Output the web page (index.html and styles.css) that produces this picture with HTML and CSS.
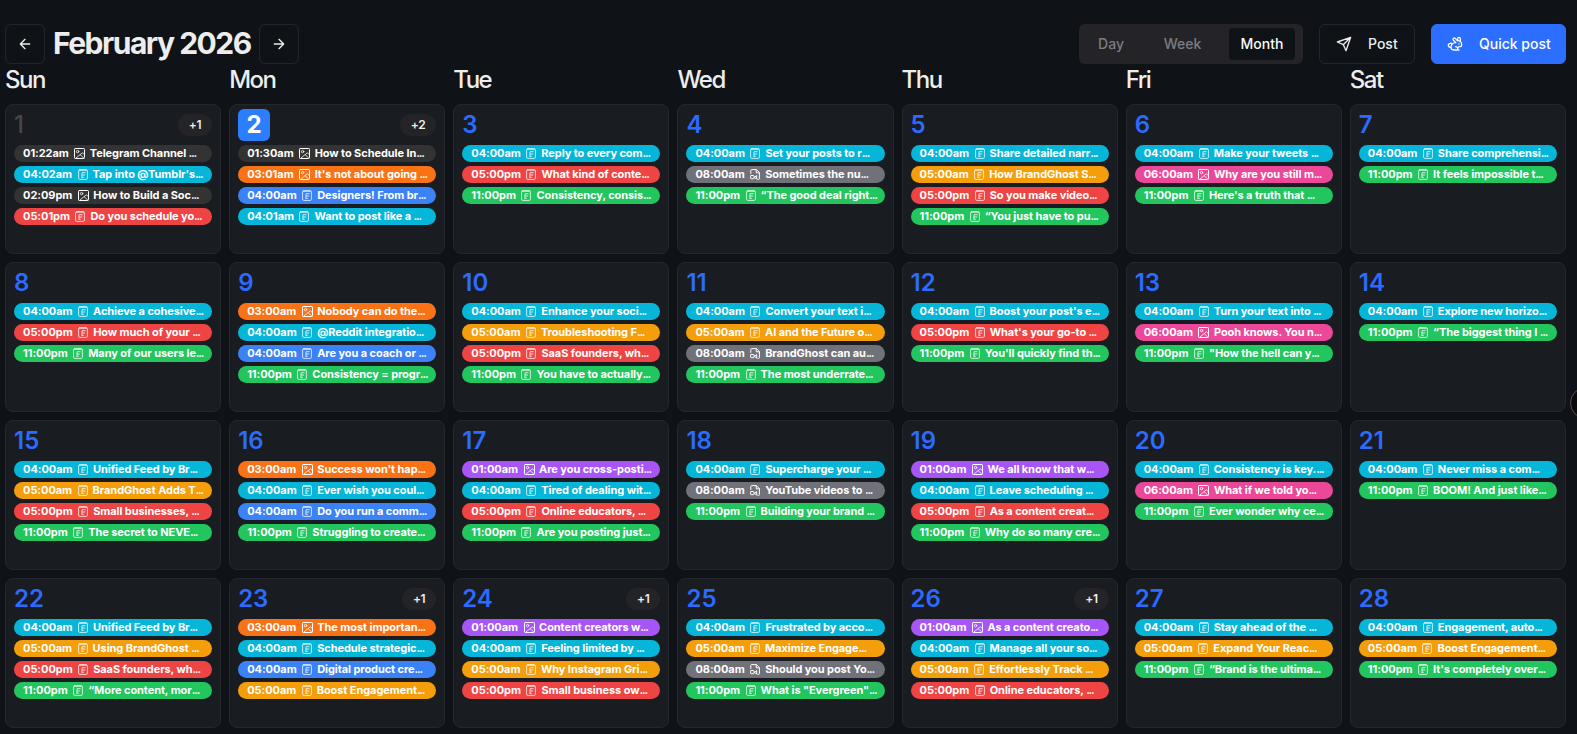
FILE: index.html
```html
<!DOCTYPE html>
<html lang="en">
<head>
<meta charset="utf-8">
<title>Calendar</title>
<link rel="stylesheet" href="styles.css">
</head>
<body>
<svg class="sprite" aria-hidden="true">
  <symbol id="i-image" viewBox="0 0 11 11"><rect x=".5" y=".5" width="10" height="10" rx=".8"/><g stroke-width=".8"><circle cx="3.600" cy="3.600" r="1.200"/><path d="M2 10 8.300 4.800l2 1.700M6.300 6.800l3.400 3.200"/></g></symbol>
  <symbol id="i-text" viewBox="0 0 10 11"><rect x=".6" y=".6" width="8.800" height="9.800" rx="1.200"/><path d="M1.500 1.300h7"/><path d="M4 8.500V3.700h3.200M4 6h2.800M4 8.300h1.400"/></symbol>
  <symbol id="i-video" viewBox="0 0 10 11"><path d="M.8 4.500V1.400a.8.8 0 0 1 .8-.8h4.800l3 3v6a.8.8 0 0 1-.8.8h-.8M6.200.8v3h3"/><rect x=".6" y="6.500" width="3.400" height="3.200" rx=".6"/><path d="m4.500 8.100 2.200-1.500v3z"/></symbol>
</svg>
<main class="page">
  <header class="toolbar">
    <div class="nav">
      <button class="btn square"><svg class="ico16" viewBox="0 0 24 24"><path d="m12 19-7-7 7-7M19 12H5"/></svg></button>
      <h1 class="title">February 2026</h1>
      <button class="btn square"><svg class="ico16" viewBox="0 0 24 24"><path d="M5 12h14M12 5l7 7-7 7"/></svg></button>
    </div>
    <div class="actions">
      <div class="segments"><span class="seg day-seg">Day</span><span class="seg week-seg">Week</span><span class="seg active">Month</span></div>
      <button class="btn post"><svg class="ico16" viewBox="0 0 24 24"><path d="M22 2 15 22l-4-9-9-4zM22 2 11 13"/></svg><span>Post</span></button>
      <button class="btn quick"><svg class="ico16" viewBox="0 0 24 24"><path d="M13 16a3 3 0 0 1 2.240 5M18 12h.010M18 21h-8a4 4 0 0 1-4-4 7 7 0 0 1 7-7h.200L9.600 6.400a1 1 0 1 1 2.800-2.800L15.800 7h.200c3.300 0 6 2.700 6 6v1a2 2 0 0 1-2 2h-1a3 3 0 0 0-3 3M20 8.540V4a2 2 0 1 0-4 0v3M7.612 12.524a3 3 0 1 0-1.600 4.300"/></svg><span>Quick post</span></button>
    </div>
  </header>
  <div class="weekdays"><span>Sun</span><span>Mon</span><span>Tue</span><span>Wed</span><span>Thu</span><span>Fri</span><span>Sat</span></div>
  <section class="grid" id="grid"></section>
</main>
<div class="handle"></div>
<script src="calendar.js"></script>
</body>
</html>
```
FILE: styles.css
```css
* { box-sizing: border-box; }
body { margin: 0; height: 734px; overflow: hidden; background: #0f1216; color: #ededed; font-family: Inter, "Liberation Sans", sans-serif; }
.sprite { position: absolute; width: 0; height: 0; }
svg { fill: none; stroke: currentColor; stroke-width: 2; stroke-linecap: round; stroke-linejoin: round; flex: none; }
.page { padding: 24px 11px 0 5px; }
.toolbar { display: flex; justify-content: space-between; height: 40px; }
.nav { display: flex; }
.actions { display: flex; gap: 16px; }
.btn { height: 40px; border: 1px solid #24262a; border-radius: 6px; background: transparent; color: #ededed; font: 500 14px/20px Inter, sans-serif; padding: 0; display: flex; align-items: center; white-space: nowrap; }
.btn span { padding-bottom: 1px; }
.square { width: 40px; justify-content: center; }
.ico16 { width: 16px; height: 16px; }
.title { margin: 0; width: 214px; padding-left: 8px; font-size: 30px; line-height: 39px; font-weight: 700; letter-spacing: -1.500px; white-space: nowrap; }
.segments { display: flex; width: 224px; padding: 4px 8px 4px 4px; border-radius: 6px; background: #242428; color: #7c7c80; font-size: 14px; line-height: 32px; font-weight: 500; }
.seg { text-align: center; border-radius: 4px; }
.day-seg { width: 56px; }
.week-seg { width: 90px; padding-right: 3px; }
.active { width: 66px; background: #0f1216; color: #fafafa; }
.post { width: 96px; padding-left: 16px; gap: 16px; }
.quick { width: 135px; padding-left: 15px; gap: 16px; border-color: #2c6eff; background: #2c6eff; color: #fff; }
.weekdays, .grid { display: grid; grid-template-columns: repeat(7, minmax(0, 1fr)); column-gap: 8px; }
.weekdays { height: 40px; font-size: 24px; line-height: 32px; letter-spacing: -1.500px; font-weight: 500; }
.grid { grid-auto-rows: 150px; row-gap: 8px; }
.cell { border: 1px solid #24272b; border-radius: 8px; background: #191c21; padding: 4px 8px; }
.head { display: flex; align-items: center; justify-content: space-between; height: 32px; margin-bottom: 4px; }
.num { font-size: 24px; line-height: 32px; font-weight: 600; color: #2c6bff; }
.past .num { color: #45474b; font-weight: 500; }
.today .num { width: 32px; text-align: center; border-radius: 6px; background: #2b7fff; color: #fff; font-weight: 700; }
.more { height: 22px; padding: 0 11px; border-radius: 11px; background: #242428; color: #ededed; font-size: 12px; line-height: 22px; font-weight: 600; letter-spacing: -0.400px; }
.events { display: flex; flex-direction: column; gap: 4px; }
.event { display: flex; align-items: center; height: 17px; padding: 0 9px; border-radius: 9px; color: #fff; font-size: 11px; line-height: 17px; font-weight: 700; letter-spacing: -0.040px; white-space: nowrap; overflow: hidden; }
.event svg { width: 10px; height: 11px; margin: 0 5px 0 5.500px; stroke-width: 1; }
.event .image-icon { width: 11px; margin-right: 4.500px; }
.event .text-icon { opacity: .75; }
.name { letter-spacing: -0.080px; }
.dots { letter-spacing: -1.200px; }
.cyan { background: #06b6d8; }
.red { background: #ef4444; }
.green { background: #22c55e; }
.amber { background: #f59e0b; }
.orange { background: #f97316; }
.blue { background: #3b82f6; }
.pink { background: #ec4899; }
.purple { background: #a855f7; }
.gray { background: #71717a; }
.dark { background: #333333; }
.handle { position: absolute; left: 1570px; top: 387px; width: 32px; height: 32px; border: 1px solid #55514c; border-radius: 50%; background: #0a0a0b; }
```
FILE: calendar.js
```js
// Each event: colour | icon (t text, i image, v video) | time | title
const days = [
  ["dark|i|01:22am|Telegram Channel ...", "cyan|t|04:02am|Tap into @Tumblr's...", "dark|i|02:09pm|How to Build a Soc...", "red|t|05:01pm|Do you schedule yo..."],
  ["dark|i|01:30am|How to Schedule In...", "orange|i|03:01am|It's not about going ...", "blue|t|04:00am|Designers! From br...", "cyan|t|04:01am|Want to post like a ..."],
  ["cyan|t|04:00am|Reply to every com...", "red|t|05:00pm|What kind of conte...", "green|t|11:00pm|Consistency, consis..."],
  ["cyan|t|04:00am|Set your posts to r...", "gray|v|08:00am|Sometimes the nu...", "green|t|11:00pm|“The good deal right..."],
  ["cyan|t|04:00am|Share detailed narr...", "amber|t|05:00am|How BrandGhost S...", "red|t|05:00pm|So you make video...", "green|t|11:00pm|“You just have to pu..."],
  ["cyan|t|04:00am|Make your tweets ...", "pink|i|06:00am|Why are you still m...", "green|t|11:00pm|Here's a truth that ..."],
  ["cyan|t|04:00am|Share comprehensi...", "green|t|11:00pm|It feels impossible t..."],
  ["cyan|t|04:00am|Achieve a cohesive...", "red|t|05:00pm|How much of your ...", "green|t|11:00pm|Many of our users le..."],
  ["orange|i|03:00am|Nobody can do the...", "cyan|t|04:00am|@Reddit integratio...", "blue|t|04:00am|Are you a coach or ...", "green|t|11:00pm|Consistency = progr..."],
  ["cyan|t|04:00am|Enhance your soci...", "amber|t|05:00am|Troubleshooting F...", "red|t|05:00pm|SaaS founders, wh...", "green|t|11:00pm|You have to actually..."],
  ["cyan|t|04:00am|Convert your text i...", "amber|t|05:00am|AI and the Future o...", "gray|v|08:00am|BrandGhost can au...", "green|t|11:00pm|The most underrate..."],
  ["cyan|t|04:00am|Boost your post's e...", "red|t|05:00pm|What's your go-to ...", "green|t|11:00pm|You'll quickly find th..."],
  ["cyan|t|04:00am|Turn your text into ...", "pink|i|06:00am|Pooh knows. You n...", "green|t|11:00pm|\"How the hell can y..."],
  ["cyan|t|04:00am|Explore new horizo...", "green|t|11:00pm|“The biggest thing I ..."],
  ["cyan|t|04:00am|Unified Feed by Br...", "amber|t|05:00am|BrandGhost Adds T...", "red|t|05:00pm|Small businesses, ...", "green|t|11:00pm|The secret to NEVE..."],
  ["orange|i|03:00am|Success won't hap...", "cyan|t|04:00am|Ever wish you coul...", "blue|t|04:00am|Do you run a comm...", "green|t|11:00pm|Struggling to create..."],
  ["purple|i|01:00am|Are you cross-posti...", "cyan|t|04:00am|Tired of dealing wit...", "red|t|05:00pm|Online educators, ...", "green|t|11:00pm|Are you posting just..."],
  ["cyan|t|04:00am|Supercharge your ...", "gray|v|08:00am|YouTube videos to ...", "green|t|11:00pm|Building your brand ..."],
  ["purple|i|01:00am|We all know that w...", "cyan|t|04:00am|Leave scheduling ...", "red|t|05:00pm|As a content creat...", "green|t|11:00pm|Why do so many cre..."],
  ["cyan|t|04:00am|Consistency is key....", "pink|i|06:00am|What if we told yo...", "green|t|11:00pm|Ever wonder why ce..."],
  ["cyan|t|04:00am|Never miss a com...", "green|t|11:00pm|BOOM! And just like..."],
  ["cyan|t|04:00am|Unified Feed by Br...", "amber|t|05:00am|Using BrandGhost ...", "red|t|05:00pm|SaaS founders, wh...", "green|t|11:00pm|“More content, mor..."],
  ["orange|i|03:00am|The most importan...", "cyan|t|04:00am|Schedule strategic...", "blue|t|04:00am|Digital product cre...", "amber|t|05:00am|Boost Engagement..."],
  ["purple|i|01:00am|Content creators w...", "cyan|t|04:00am|Feeling limited by ...", "amber|t|05:00am|Why Instagram Gri...", "red|t|05:00pm|Small business ow..."],
  ["cyan|t|04:00am|Frustrated by acco...", "amber|t|05:00am|Maximize Engage...", "gray|v|08:00am|Should you post Yo...", "green|t|11:00pm|What is \"Evergreen\"..."],
  ["purple|i|01:00am|As a content creato...", "cyan|t|04:00am|Manage all your so...", "amber|t|05:00am|Effortlessly Track ...", "red|t|05:00pm|Online educators, ..."],
  ["cyan|t|04:00am|Stay ahead of the ...", "amber|t|05:00am|Expand Your Reac...", "green|t|11:00pm|“Brand is the ultima..."],
  ["cyan|t|04:00am|Engagement, auto...", "amber|t|05:00am|Boost Engagement...", "green|t|11:00pm|It's completely over..."]
];
const extra = { 1: "+1", 2: "+2", 23: "+1", 24: "+1", 26: "+1" };
const icons = { t: "text", i: "image", v: "video" };

document.getElementById("grid").innerHTML = days.map((events, i) => {
  const n = i + 1;
  const state = n === 1 ? " past" : n === 2 ? " today" : "";
  const more = extra[n] ? `<span class="more">${extra[n]}</span>` : "";
  const rows = events.map(e => {
    const [color, kind, time, title] = e.split("|");
    const icon = icons[kind];
    return `<div class="event ${color}"><span class="time">${time}</span><svg class="${icon}-icon"><use href="#i-${icon}"/></svg><span class="name">${title.slice(0, -3)}<span class="dots">...</span></span></div>`;
  }).join("");
  return `<article class="cell${state}"><div class="head"><span class="num">${n}</span>${more}</div><div class="events">${rows}</div></article>`;
}).join("");
```
